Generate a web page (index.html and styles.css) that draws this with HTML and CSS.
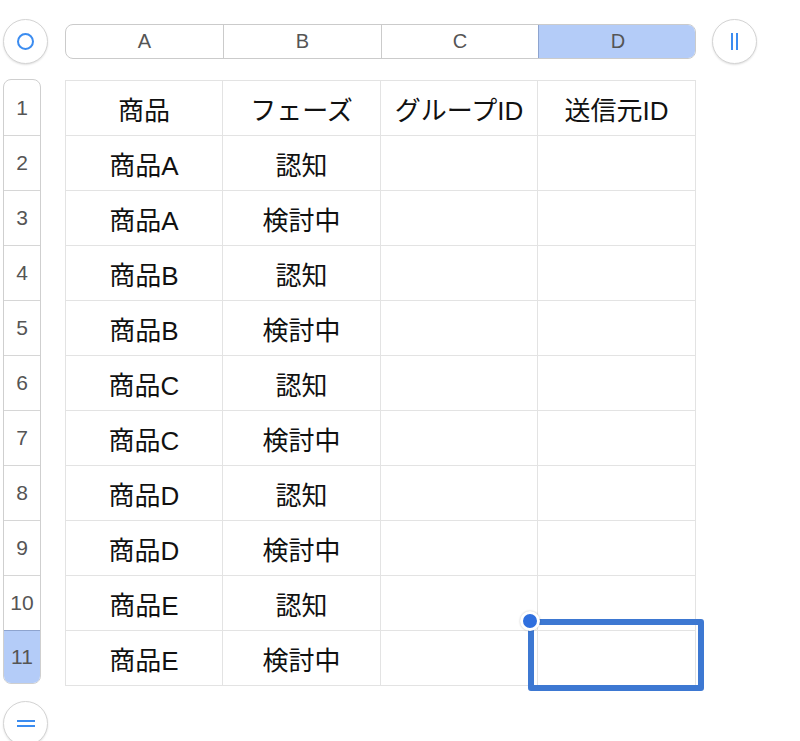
FILE: index.html
```html
<!DOCTYPE html>
<html lang="ja">
<head>
<meta charset="utf-8">
<link rel="stylesheet" href="styles.css">
</head>
<body>
<div class="sheet">
  <div class="corner-btn"><span class="ring"></span></div>
  <div class="col-bar">
    <div class="col-h">A</div>
    <div class="col-h">B</div>
    <div class="col-h">C</div>
    <div class="col-h sel">D</div>
  </div>
  <div class="pause-btn"><span class="bar"></span><span class="bar"></span></div>

  <div class="row-bar">
    <div class="row-h">1</div>
    <div class="row-h">2</div>
    <div class="row-h">3</div>
    <div class="row-h">4</div>
    <div class="row-h">5</div>
    <div class="row-h">6</div>
    <div class="row-h">7</div>
    <div class="row-h">8</div>
    <div class="row-h">9</div>
    <div class="row-h">10</div>
    <div class="row-h sel">11</div>
  </div>
  <div class="grid-wrap">
    <div class="grid">
      <div class="c">商品</div><div class="c">フェーズ</div><div class="c">グループID</div><div class="c">送信元ID</div>
      <div class="c">商品A</div><div class="c">認知</div><div class="c"></div><div class="c"></div>
      <div class="c">商品A</div><div class="c">検討中</div><div class="c"></div><div class="c"></div>
      <div class="c">商品B</div><div class="c">認知</div><div class="c"></div><div class="c"></div>
      <div class="c">商品B</div><div class="c">検討中</div><div class="c"></div><div class="c"></div>
      <div class="c">商品C</div><div class="c">認知</div><div class="c"></div><div class="c"></div>
      <div class="c">商品C</div><div class="c">検討中</div><div class="c"></div><div class="c"></div>
      <div class="c">商品D</div><div class="c">認知</div><div class="c"></div><div class="c"></div>
      <div class="c">商品D</div><div class="c">検討中</div><div class="c"></div><div class="c"></div>
      <div class="c">商品E</div><div class="c">認知</div><div class="c"></div><div class="c"></div>
      <div class="c">商品E</div><div class="c">検討中</div><div class="c"></div><div class="c"></div>
    </div>
    <div class="selection"><span class="handle"></span></div>
  </div>
  <div class="add-btn"><span class="line"></span><span class="line"></span></div>
</div>
</body>
</html>
```
FILE: styles.css
```css
html, body {
  margin: 0;
  padding: 0;
  background: #fff;
  overflow: hidden;
}
body {
  font-family: "Liberation Sans", "Noto Sans CJK JP", sans-serif;
}
.sheet {
  display: grid;
  grid-template-columns: 62px 631px 61px;
  grid-template-rows: 45px 605px 45px;
  row-gap: 16px;
  padding: 19px 0 0 3px;
}
.corner-btn, .pause-btn, .add-btn {
  width: 45px;
  height: 45px;
  box-sizing: border-box;
  border: 1px solid #d4d4d4;
  border-radius: 50%;
  box-shadow: 0 1px 2px rgba(0,0,0,0.12);
  background: #fff;
  display: flex;
  align-items: center;
  justify-content: center;
  gap: 3px;
}
.corner-btn { grid-column: 1; grid-row: 1; }
.col-bar { grid-column: 2; grid-row: 1; }
.pause-btn { grid-column: 3; grid-row: 1; margin-left: 16px; }
.row-bar { grid-column: 1; grid-row: 2; }
.grid-wrap { grid-column: 2; grid-row: 2; }
.add-btn { grid-column: 1; grid-row: 3; flex-direction: column; }
.ring {
  width: 13px;
  height: 13px;
  border: 2px solid #3b8cf0;
  border-radius: 50%;
}
.pause-btn .bar {
  width: 2px;
  height: 17px;
  background: #3b8cf0;
}
.add-btn .line {
  width: 18px;
  height: 2px;
  background: #3b8cf0;
}
.col-bar {
  align-self: center;
  display: grid;
  grid-template-columns: 157px 158px 157px 159px;
  height: 35px;
  border: 1px solid #cbcbcb;
  border-radius: 8px;
  box-sizing: border-box;
  overflow: hidden;
}
.col-h {
  display: flex;
  align-items: center;
  justify-content: center;
  font-family: "Liberation Sans", "Noto Sans", sans-serif;
  font-size: 20px;
  color: #555;
  border-left: 1px solid #cbcbcb;
}
.col-h:first-child { border-left: none; }
.col-h.sel {
  background: #b4ccf8;
  border-left-color: #8ea4cf;
}
.row-bar {
  width: 38px;
  box-sizing: border-box;
  border: 1px solid #cfcfcf;
  border-radius: 8px;
  overflow: hidden;
  display: grid;
  grid-template-rows: repeat(10, 55px) 1fr;
  align-self: start;
  height: 605px;
  margin-top: -1px;
}
.row-h {
  display: flex;
  align-items: center;
  justify-content: center;
  font-family: "Liberation Sans", "Noto Sans", sans-serif;
  font-size: 21px;
  color: #555;
  border-top: 1px solid #d6d6d6;
}
.row-h:first-child { border-top: none; }
.row-h.sel {
  background: #b4ccf8;
  border-top-color: #8ea4cf;
}
.grid-wrap {
  position: relative;
}
.grid {
  display: grid;
  grid-template-columns: 157px 158px 157px 158px;
  grid-auto-rows: 55px;
  border-top: 1px solid #e3e3e3;
  border-left: 1px solid #e3e3e3;
  width: 631px;
  box-sizing: border-box;
}
.c {
  border-right: 1px solid #e3e3e3;
  border-bottom: 1px solid #e3e3e3;
  display: flex;
  align-items: center;
  justify-content: center;
  font-size: 26px;
  color: #111;
}
.selection {
  position: absolute;
  left: 463px;
  top: 539px;
  width: 176px;
  height: 72px;
  box-sizing: border-box;
  border: 6px solid #3d78d2;
  border-radius: 3px;
}
.handle {
  position: absolute;
  left: -14px;
  top: -14px;
  width: 14px;
  height: 14px;
  border-radius: 50%;
  background: #2f6fde;
  border: 3px solid #fff;
  box-shadow: 0 0 2px rgba(0,0,0,0.25);
}
```
